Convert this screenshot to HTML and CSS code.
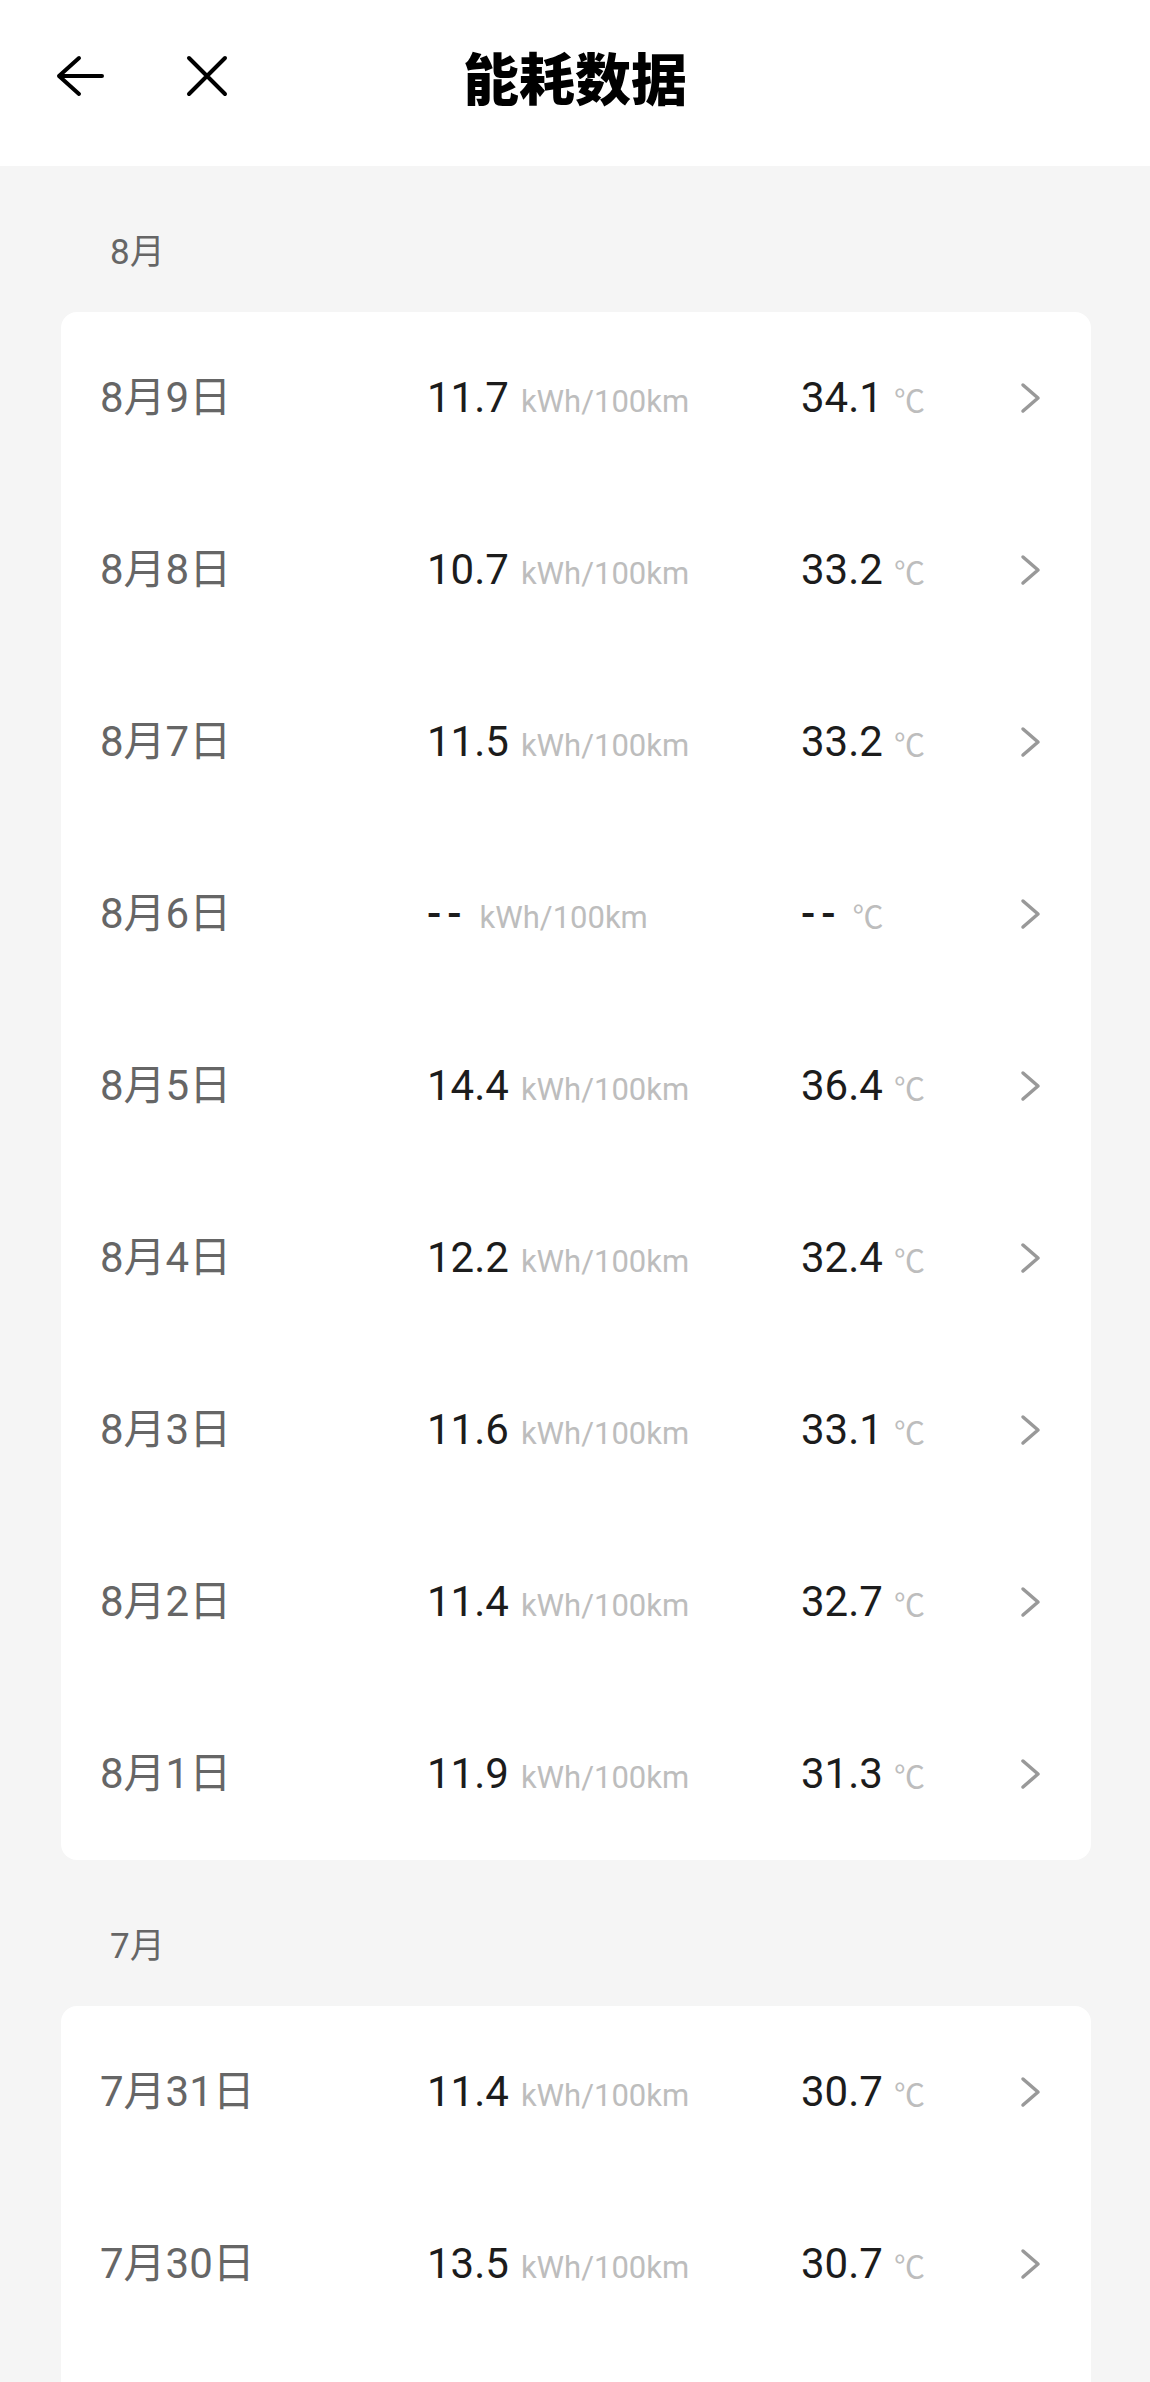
FILE: index.html
```html
<!DOCTYPE html>
<html lang="zh-CN">
<head>
<meta charset="UTF-8">
<meta name="viewport" content="width=device-width, initial-scale=1.0">
<title>能耗数据</title>
<link rel="stylesheet" href="styles.css">
</head>
<body>
  <div class="topbar">
    <div class="topbar-left">
      <svg class="icon-back" width="52" height="44" viewBox="0 0 52 44">
        <path d="M4 22 H47 M24 4 L4 22 L24 40" fill="none" stroke="#000" stroke-width="4" stroke-linecap="round" stroke-linejoin="round"/>
      </svg>
      <svg class="icon-close" width="44" height="44" viewBox="0 0 44 44">
        <path d="M4 4 L40 40 M40 4 L4 40" fill="none" stroke="#000" stroke-width="4" stroke-linecap="round"/>
      </svg>
    </div>
    <h1 class="title">能耗数据</h1>
    <div></div>
  </div>

  <p class="month">8月</p>
  <div class="card">
    <div class="row"><span class="date">8月9日</span><span class="val"><span class="num">11.7</span><span class="unit">kWh/100km</span></span><span class="val"><span class="num">34.1</span><span class="unit deg">℃</span></span><svg class="chev" width="21" height="32" viewBox="0 0 21 32"><path d="M3 3 L18 16 L3 29" fill="none" stroke="#999" stroke-width="3.5" stroke-linecap="round" stroke-linejoin="round"/></svg></div>
    <div class="row"><span class="date">8月8日</span><span class="val"><span class="num">10.7</span><span class="unit">kWh/100km</span></span><span class="val"><span class="num">33.2</span><span class="unit deg">℃</span></span><svg class="chev" width="21" height="32" viewBox="0 0 21 32"><path d="M3 3 L18 16 L3 29" fill="none" stroke="#999" stroke-width="3.5" stroke-linecap="round" stroke-linejoin="round"/></svg></div>
    <div class="row"><span class="date">8月7日</span><span class="val"><span class="num">11.5</span><span class="unit">kWh/100km</span></span><span class="val"><span class="num">33.2</span><span class="unit deg">℃</span></span><svg class="chev" width="21" height="32" viewBox="0 0 21 32"><path d="M3 3 L18 16 L3 29" fill="none" stroke="#999" stroke-width="3.5" stroke-linecap="round" stroke-linejoin="round"/></svg></div>
    <div class="row"><span class="date">8月6日</span><span class="val"><span class="num empty">--</span><span class="unit">kWh/100km</span></span><span class="val"><span class="num empty">--</span><span class="unit deg">℃</span></span><svg class="chev" width="21" height="32" viewBox="0 0 21 32"><path d="M3 3 L18 16 L3 29" fill="none" stroke="#999" stroke-width="3.5" stroke-linecap="round" stroke-linejoin="round"/></svg></div>
    <div class="row"><span class="date">8月5日</span><span class="val"><span class="num">14.4</span><span class="unit">kWh/100km</span></span><span class="val"><span class="num">36.4</span><span class="unit deg">℃</span></span><svg class="chev" width="21" height="32" viewBox="0 0 21 32"><path d="M3 3 L18 16 L3 29" fill="none" stroke="#999" stroke-width="3.5" stroke-linecap="round" stroke-linejoin="round"/></svg></div>
    <div class="row"><span class="date">8月4日</span><span class="val"><span class="num">12.2</span><span class="unit">kWh/100km</span></span><span class="val"><span class="num">32.4</span><span class="unit deg">℃</span></span><svg class="chev" width="21" height="32" viewBox="0 0 21 32"><path d="M3 3 L18 16 L3 29" fill="none" stroke="#999" stroke-width="3.5" stroke-linecap="round" stroke-linejoin="round"/></svg></div>
    <div class="row"><span class="date">8月3日</span><span class="val"><span class="num">11.6</span><span class="unit">kWh/100km</span></span><span class="val"><span class="num">33.1</span><span class="unit deg">℃</span></span><svg class="chev" width="21" height="32" viewBox="0 0 21 32"><path d="M3 3 L18 16 L3 29" fill="none" stroke="#999" stroke-width="3.5" stroke-linecap="round" stroke-linejoin="round"/></svg></div>
    <div class="row"><span class="date">8月2日</span><span class="val"><span class="num">11.4</span><span class="unit">kWh/100km</span></span><span class="val"><span class="num">32.7</span><span class="unit deg">℃</span></span><svg class="chev" width="21" height="32" viewBox="0 0 21 32"><path d="M3 3 L18 16 L3 29" fill="none" stroke="#999" stroke-width="3.5" stroke-linecap="round" stroke-linejoin="round"/></svg></div>
    <div class="row"><span class="date">8月1日</span><span class="val"><span class="num">11.9</span><span class="unit">kWh/100km</span></span><span class="val"><span class="num">31.3</span><span class="unit deg">℃</span></span><svg class="chev" width="21" height="32" viewBox="0 0 21 32"><path d="M3 3 L18 16 L3 29" fill="none" stroke="#999" stroke-width="3.5" stroke-linecap="round" stroke-linejoin="round"/></svg></div>
  </div>

  <p class="month">7月</p>
  <div class="card card-more">
    <div class="row"><span class="date">7月31日</span><span class="val"><span class="num">11.4</span><span class="unit">kWh/100km</span></span><span class="val"><span class="num">30.7</span><span class="unit deg">℃</span></span><svg class="chev" width="21" height="32" viewBox="0 0 21 32"><path d="M3 3 L18 16 L3 29" fill="none" stroke="#999" stroke-width="3.5" stroke-linecap="round" stroke-linejoin="round"/></svg></div>
    <div class="row"><span class="date">7月30日</span><span class="val"><span class="num">13.5</span><span class="unit">kWh/100km</span></span><span class="val"><span class="num">30.7</span><span class="unit deg">℃</span></span><svg class="chev" width="21" height="32" viewBox="0 0 21 32"><path d="M3 3 L18 16 L3 29" fill="none" stroke="#999" stroke-width="3.5" stroke-linecap="round" stroke-linejoin="round"/></svg></div>
  </div>
</body>
</html>
```

FILE: styles.css
```css
body {
  margin: 0;
  background-color: #f5f5f5;
  font-family: Roboto, "Noto Sans CJK SC", sans-serif;
}
.topbar {
  background-color: #ffffff;
  height: 166px;
  box-sizing: border-box;
  padding-bottom: 14px;
  display: grid;
  grid-template-columns: 1fr auto 1fr;
  align-items: center;
}
.topbar-left {
  display: flex;
  align-items: center;
  padding-left: 55px;
}
.icon-close {
  margin-left: 78px;
}
.title {
  margin: 0;
  font-family: "Noto Sans CJK SC", sans-serif;
  font-size: 56px;
  font-weight: 900;
  line-height: 1;
  color: #000000;
}
.month {
  margin: 0;
  height: 146px;
  box-sizing: border-box;
  padding: 64px 0 0 110px;
  font-size: 35px;
  line-height: 46px;
  color: #666666;
}
.card {
  margin: 0 59px 0 61px;
  background-color: #ffffff;
  border-radius: 16px;
}
.card-more {
  padding-bottom: 60px;
}
.row {
  height: 172px;
  box-sizing: border-box;
  padding: 0 50px 0 39px;
  display: grid;
  grid-template-columns: 327px 374px 1fr 21px;
  align-items: center;
}
.date {
  font-size: 42px;
  line-height: 1;
  color: #666666;
}
.val {
  display: flex;
  align-items: baseline;
  gap: 12px;
  line-height: 1;
}
.num {
  font-size: 42px;
  color: #1c1c1c;
}
.num.empty {
  letter-spacing: 6px;
  font-weight: 500;
}
.unit {
  font-size: 31px;
  color: #bdbdbd;
}
.deg {
  font-family: "Noto Sans CJK SC", sans-serif;
  margin-left: -1px;
}
.chev {
  display: block;
}
```
